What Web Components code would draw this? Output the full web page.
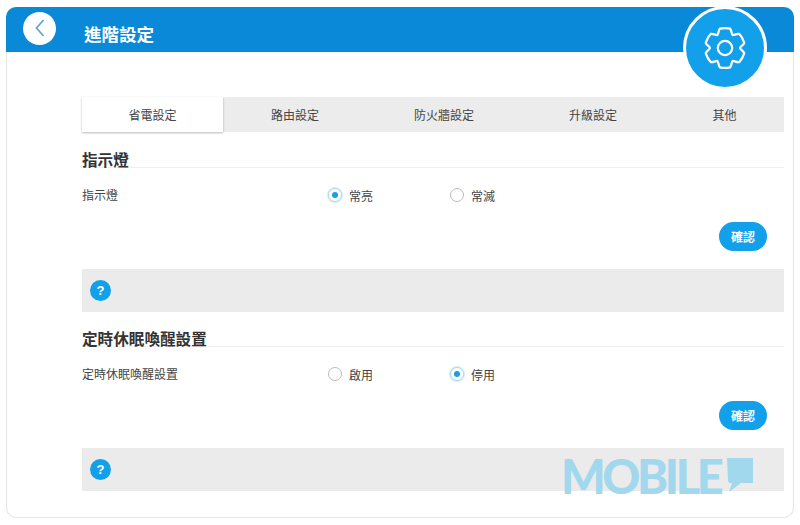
<!DOCTYPE html>
<html lang="zh-Hant">
<head>
<meta charset="utf-8">
<title>進階設定</title>
<style>
  html, body { margin: 0; background: #fff; }
  body { font-family: "Noto Sans CJK TC", "Liberation Sans", sans-serif; color: #444; }
</style>
</head>
<body>
<settings-card heading="進階設定">
  <tab-bar active="0"></tab-bar>
  <setting-section heading="指示燈" label="指示燈" first="常亮" second="常滅" selected="0"></setting-section>
  <setting-section heading="定時休眠喚醒設置" label="定時休眠喚醒設置" first="啟用" second="停用" selected="1" class="second"></setting-section>
</settings-card>
<script>
// six rounded lobes: top, bottom and the four diagonals
function gearPath(cx, cy, outer, inner) {
  const pt = (deg, r) => {
    const a = deg * Math.PI / 180;
    return (cx + r * Math.cos(a)).toFixed(2) + ' ' + (cy + r * Math.sin(a)).toFixed(2);
  };
  let d = 'M' + pt(-120, inner);
  for (let i = 0; i < 6; i++) {
    const a = -90 + i * 60;
    d += ' C' + pt(a - 27, inner - 0.4) + ' ' + pt(a - 21, outer - 1.2) + ' ' + pt(a - 15, outer);
    d += ' Q' + pt(a, outer + 0.5) + ' ' + pt(a + 15, outer);
    d += ' C' + pt(a + 21, outer - 1.2) + ' ' + pt(a + 27, inner - 0.4) + ' ' + pt(a + 30, inner);
  }
  return d + 'Z';
}

class SettingsCard extends HTMLElement {
  constructor() {
    super();
    this.attachShadow({ mode: 'open' });
  }
  connectedCallback() {
    this.shadowRoot.innerHTML = `
      <style>
        :host { display: block; position: relative; width: 788px; height: 511px; margin: 7px 6px; box-sizing: border-box; border: 1px solid #e4e4e4; border-top: 0; border-radius: 10px; }
        .head { height: 45px; margin: 0 -1px; background: #0a89d9; border-radius: 10px 10px 0 0; display: flex; align-items: center; padding-left: 17px; gap: 28px; box-sizing: border-box; }
        .back { width: 33px; height: 33px; margin-top: -3px; border-radius: 50%; background: #fff; display: flex; align-items: center; justify-content: center; }
        h1 { margin: 9px 0 0; font-size: 17.5px; font-weight: 700; color: #fff; line-height: 20px; }
        .gear { position: absolute; left: 676px; top: -1px; width: 84px; height: 84px; box-sizing: border-box; border-radius: 50%; background: #13a0ea; border: 3px solid #fff; display: flex; align-items: center; justify-content: center; }
        .body { padding: 45px 9px 0 75px; }
        .mark { position: absolute; left: 554px; top: 448px; display: flex; align-items: flex-start; color: #a2d8ee; font: 900 47px/42px Lato, sans-serif; letter-spacing: -3.4px; }
        .mark span { width: 166px; white-space: nowrap; }
        .mark svg { margin-top: 3px; flex: none; }
      </style>
      <div class="head">
        <span class="back">
          <svg width="14" height="20" viewBox="0 0 14 20"><path d="M10.5 2 L3.5 10 L10.5 18" fill="none" stroke="#5a9fd0" stroke-width="1.6"/></svg>
        </span>
        <h1>${this.getAttribute('heading')}</h1>
      </div>
      <div class="gear">
        <svg width="44" height="44" viewBox="0 0 44 44" fill="none" stroke="#fff" stroke-width="2.2" stroke-linejoin="round">
          <circle cx="22" cy="22" r="7.2"/>
          <path d="${gearPath(22, 22, 20, 15)}"/>
        </svg>
      </div>
      <div class="body"><slot></slot></div>
      <div class="mark">
        <span>MOBILE</span>
        <svg width="26" height="35" viewBox="0 0 26 35"><path d="M0 0H26V25H14L2 34L5 25H3Q1 25 1 22Z" fill="#a2d8ee"/></svg>
      </div>
    `;
  }
}

class TabBar extends HTMLElement {
  constructor() {
    super();
    this.attachShadow({ mode: 'open' });
  }
  connectedCallback() {
    const tabs = ['省電設定', '路由設定', '防火牆設定', '升級設定', '其他'];
    const active = Number(this.getAttribute('active')) || 0;
    this.shadowRoot.innerHTML = `
      <style>
        :host { display: grid; grid-template-columns: 141px 144px 154px 144px 119px; height: 35px; background: #ececec; font-size: 12px; color: #444; }
        div { display: flex; align-items: center; justify-content: center; }
        .on { background: #fff; box-shadow: 0 1px 2px rgba(0,0,0,.28); }
      </style>
      ${tabs.map((t, i) => `<div class="${i === active ? 'on' : ''}">${t}</div>`).join('')}
    `;
  }
}

class SettingSection extends HTMLElement {
  constructor() {
    super();
    this.attachShadow({ mode: 'open' });
  }
  connectedCallback() {
    const sel = Number(this.getAttribute('selected')) || 0;
    const radio = (text, on) => `
      <label><i class="${on ? 'on' : ''}"></i>${text}</label>`;
    this.shadowRoot.innerHTML = `
      <style>
        :host { display: block; padding-top: 18px; }
        :host(.second) { padding-top: 17px; }
        h2 { margin: 0; height: 17px; font-size: 15.6px; line-height: 18px; font-weight: 700; color: #333; border-bottom: 1px solid #f0f0f0; }
        .row { display: flex; align-items: center; height: 20px; margin-top: 17px; font-size: 12px; }
        .name { width: 246px; margin-top: -2px; }
        label { display: flex; align-items: center; gap: 7px; width: 122px; }
        i { width: 12px; height: 12px; border: 1px solid #bbb; border-radius: 50%; box-sizing: content-box; flex: none; background: #fff; position: relative; }
        i.on { border-color: #a8d8ee; box-shadow: 0 0 0 1px #d8eef8; }
        i.on::after { content: ""; position: absolute; left: 3px; top: 3px; width: 6px; height: 6px; border-radius: 50%; background: #1d9fdc; }
        .actions { display: flex; justify-content: flex-end; padding: 17px 17px 0 0; }
        button { width: 48px; height: 29px; padding: 0; border: 0; border-radius: 15px; background: #13a0ea; color: #fff; font: 700 12px "Noto Sans CJK TC", sans-serif; }
        .help { display: flex; align-items: center; height: 43px; margin-top: 18px; padding-left: 8px; background: #ebebeb; }
        .q { width: 21px; height: 21px; border-radius: 50%; background: #13a0ea; color: #fff; font: 700 13px/21px "Liberation Sans", sans-serif; text-align: center; }
      </style>
      <h2>${this.getAttribute('heading')}</h2>
      <div class="row">
        <span class="name">${this.getAttribute('label')}</span>
        ${radio(this.getAttribute('first'), sel === 0)}
        ${radio(this.getAttribute('second'), sel === 1)}
      </div>
      <div class="actions"><button>確認</button></div>
      <div class="help"><span class="q">?</span></div>
    `;
  }
}

customElements.define('settings-card', SettingsCard);
customElements.define('tab-bar', TabBar);
customElements.define('setting-section', SettingSection);
</script>
</body>
</html>
